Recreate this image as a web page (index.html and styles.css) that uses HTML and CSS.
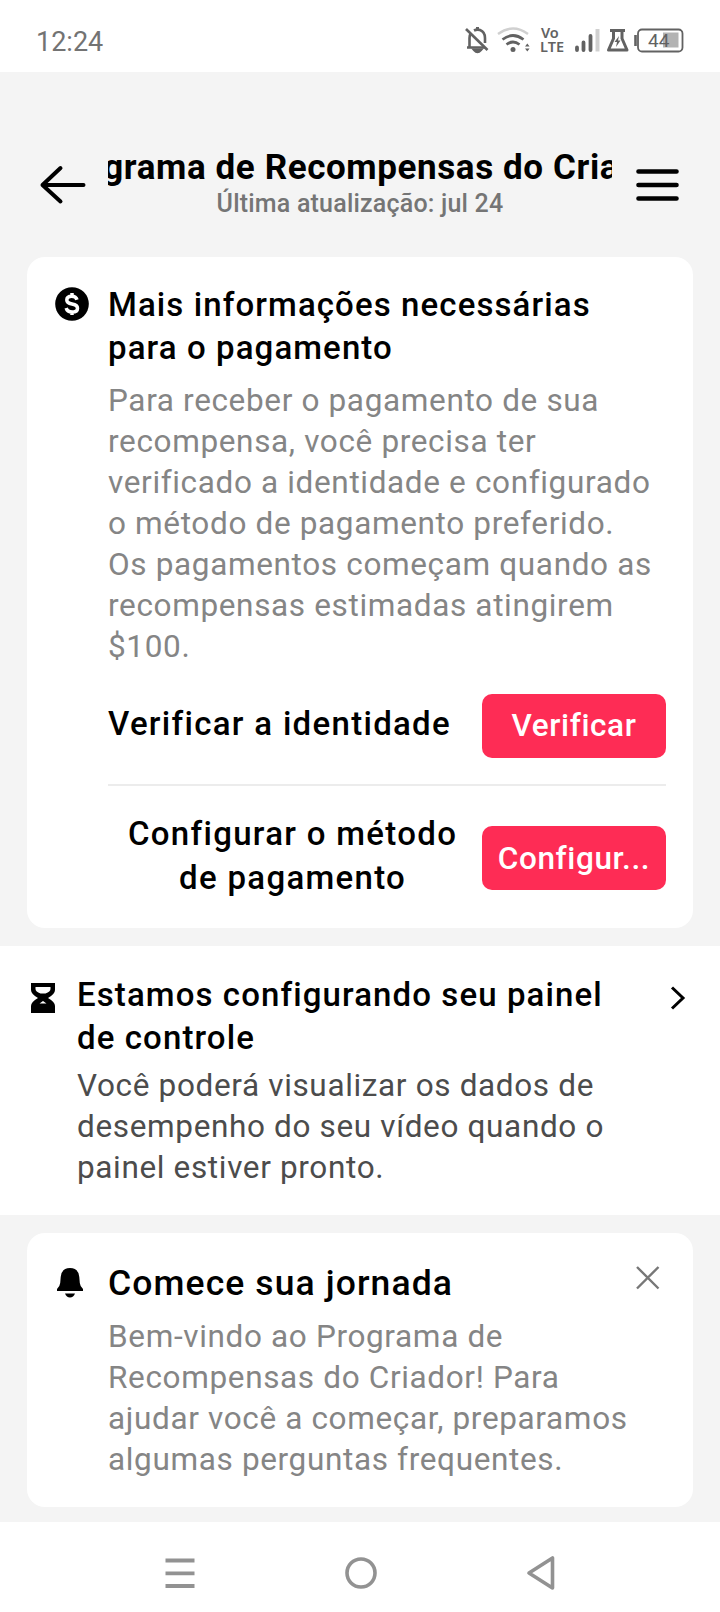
FILE: index.html
```html
<!DOCTYPE html>
<html lang="pt-BR">
<head>
    <meta charset="UTF-8">
    <meta name="viewport" content="width=device-width, initial-scale=1.0">
    <title>Programa de Recompensas do Criador</title>
    <link rel="stylesheet" href="styles.css">
</head>
<body>
    <div class="status-bar">
        <span class="clock">12:24</span>
        <svg class="status-icons" width="222" height="32" viewBox="0 0 222 32" fill="none" stroke="#626262">
            <!-- muted bell -->
            <path d="M2 22.500h18M4.500 22V13q0-3 1.500-5M9 5.500Q12 4 15 5q5 2 5 8v5" stroke-width="2.600"/>
            <path d="M1 4l21.500 21" stroke-width="2.600"/>
            <path d="M12.500 2v3M9.500 25q3 3.500 6 0z" stroke-width="3"/>
            <!-- wifi -->
            <path d="M33 9q15-11 30 0" stroke="#d0d0d0" stroke-width="2.400"/>
            <path d="M37.500 14.500q10.500-8 21 0M41.500 19.500q6.500-5 13 0" stroke-width="2.700"/>
            <circle cx="48" cy="24.500" r="2.500" fill="#626262" stroke="none"/>
            <path d="M60 21.500l2.300-3 2.300 3zM60 23.500l2.300 3 2.300-3z" fill="#626262" stroke="none"/>
            <!-- signal -->
            <path d="M112 25v-2.500M118.500 25V17.500M125.500 25V11" stroke-width="3.800" stroke-linecap="round"/>
            <path d="M132.500 26.500V4" stroke="#d0d0d0" stroke-width="4"/>
            <!-- flask -->
            <path d="M145 5.500h15M148.500 5.500v8L143.500 25h18.500l-5-11.500v-8" stroke-width="3" stroke-linejoin="round"/>
            <path d="M154 11l-4.500 6h2.500l-1 5 4.500-6.500h-2.500z" fill="#626262" stroke="none"/>
            <!-- battery -->
            <rect x="198" y="7.500" width="15.500" height="15" fill="#b3b3b3" stroke="none"/>
            <rect x="173" y="4.500" width="44.500" height="22" rx="4" stroke-width="1.800"/>
            <path d="M170.500 10v11" stroke-width="2.600"/>
            <text class="volte" x="76" y="12.500">Vo</text>
            <text class="volte" x="75" y="27">LTE</text>
            <text class="battery-level" x="183" y="21.500">44</text>
        </svg>
    </div>

    <div class="header">
        <svg width="48" height="42" viewBox="0 0 48 42" fill="none" stroke="#000" stroke-width="4" stroke-linecap="round" stroke-linejoin="round">
            <path d="M45.500 21h-41M22.500 4l-18 17 18 16.500"/>
        </svg>
        <div class="header-text">
            <h1><span>Programa de Recompensas do Criador</span></h1>
            <p>Última atualização: jul 24</p>
        </div>
        <svg class="menu" width="46" height="42" viewBox="0 0 46 42" stroke="#000" stroke-width="4.600" stroke-linecap="round">
            <path d="M2.500 7.500h38M2.500 21h38M2.500 34.500h38"/>
        </svg>
    </div>

    <div class="card payment">
        <svg class="icon" width="34" height="34" viewBox="0 0 34 34">
            <circle cx="17" cy="17" r="16.800"/>
            <path d="M22 12.800q-1-3.600-5.200-3.600-5 0-5 3.800 0 3 5.200 4 5.500 1 5.500 4.200 0 3.800-5.300 3.800-5 0-6-4M17 6v3M17 25v3" fill="none" stroke="#fff" stroke-width="3.500"/>
        </svg>
        <div class="content">
            <h2>Mais informações necessárias<br>para o pagamento</h2>
            <p class="text">Para receber o pagamento de sua<br>recompensa, você precisa ter<br>verificado a identidade e configurado<br>o método de pagamento preferido.<br>Os pagamentos começam quando as<br>recompensas estimadas atingirem<br>$100.</p>
            <div class="row">
                <span class="label">Verificar a identidade</span>
                <button class="btn">Verificar</button>
            </div>
            <div class="row">
                <span class="label label-center">Configurar o método<br>de pagamento</span>
                <button class="btn">Configur...</button>
            </div>
        </div>
    </div>

    <div class="panel">
        <svg class="icon" width="24" height="30" viewBox="0 0 24 30">
            <path d="M0 0h24v7q0 4-7 8 7 4 7 8v7H0v-7q0-4 7-8-7-4-7-8z"/>
            <path d="M4.500 4h15v2q0 2.500-5 4.500h-5Q4.500 8.500 4.500 6zM8.500 20.500L12 18l3.500 2.500z" fill="#fff"/>
        </svg>
        <div class="content">
            <h2>Estamos configurando seu painel<br>de controle</h2>
            <p class="text">Você poderá visualizar os dados de<br>desempenho do seu vídeo quando o<br>painel estiver pronto.</p>
        </div>
        <svg class="chevron" width="16" height="26" viewBox="0 0 16 26" fill="none" stroke="#000" stroke-width="3">
            <path d="M2 2.500L13 13 2 23.500"/>
        </svg>
    </div>

    <div class="card journey">
        <svg class="icon" width="28" height="30" viewBox="0 0 28 30">
            <path d="M14 0q8.500 0 9.300 9l.5 6Q24 18 27 21v2H1v-2q3-3 3.200-6l.5-6Q5.500 0 14 0zM9 25.500h10q-1.500 4-5 4t-5-4z"/>
        </svg>
        <div class="content">
            <h2>Comece sua jornada</h2>
            <p class="text">Bem-vindo ao Programa de<br>Recompensas do Criador! Para<br>ajudar você a começar, preparamos<br>algumas perguntas frequentes.</p>
        </div>
        <svg class="close" width="24" height="24" viewBox="0 0 24 24" stroke="#777" stroke-width="2.400">
            <path d="M1 1l21.500 21.500M22.500 1L1 22.500"/>
        </svg>
    </div>

    <div class="nav-bar">
        <svg width="30" height="34" viewBox="0 0 30 34" stroke="#929292" stroke-width="3.800">
            <path d="M.5 4.500h29M.5 17.300h29M.5 30h29"/>
        </svg>
        <svg width="34" height="34" viewBox="0 0 34 34" fill="none" stroke="#929292" stroke-width="3.600">
            <circle cx="17" cy="17" r="14"/>
        </svg>
        <svg width="30" height="36" viewBox="0 0 30 36" fill="none" stroke="#929292" stroke-width="3.600" stroke-linejoin="round">
            <path d="M26.500 3v30L3 18z"/>
        </svg>
    </div>
</body>
</html>
```
FILE: styles.css
```css
* {
    box-sizing: border-box;
}
body {
    margin: 0;
    width: 720px;
    height: 1612px;
    overflow: hidden;
    background-color: #f4f4f4;
    color: #000;
    font-family: Roboto, "Liberation Sans", sans-serif;
}
h1, h2, p {
    margin: 0;
}
svg {
    display: block;
    flex-shrink: 0;
}
.status-bar {
    height: 72px;
    padding: 0 33px 0 36px;
    display: flex;
    justify-content: space-between;
    align-items: flex-start;
    background-color: #fff;
}
.clock {
    margin-top: 26px;
    font-size: 27px;
    line-height: 32px;
    color: #737373;
}
.status-icons {
    margin-top: 25px;
    overflow: visible;
}
.volte, .battery-level {
    fill: #626262;
    stroke: none;
}
.volte {
    font: 600 14.500px "Noto Sans", sans-serif;
}
.battery-level {
    font-size: 19px;
}
.header {
    height: 185px;
    padding: 71px 40px 0 38px;
    display: flex;
    align-items: flex-start;
}
.header > svg {
    margin-top: 21px;
}
.header-text {
    width: 504px;
    margin: 0 auto 0 22px;
    text-align: center;
}
.header h1 {
    height: 48px;
    display: flex;
    justify-content: center;
    overflow: hidden;
    white-space: nowrap;
    font-size: 35px;
    line-height: 49px;
    font-weight: 700;
    letter-spacing: 0.600px;
}
.header p {
    font-size: 25px;
    line-height: 26px;
    font-weight: 500;
    letter-spacing: 0.200px;
    color: #757575;
}
.header > .menu {
    margin-right: -2px;
}
.card {
    display: flex;
    margin: 0 27px;
    border-radius: 18px;
    background-color: #fff;
}
.payment {
    height: 671px;
    padding: 26px 27px 0 28px;
}
.payment .icon {
    margin-top: 4px;
}
.card .content {
    flex: 1;
}
.payment .content {
    margin-left: 19px;
}
h2 {
    font-size: 33px;
    line-height: 43px;
    font-weight: 500;
    letter-spacing: 1.100px;
    white-space: nowrap;
}
.text {
    font-size: 31.500px;
    line-height: 41px;
    letter-spacing: 0.650px;
    color: #858585;
    white-space: nowrap;
}
.payment .text {
    margin-top: 11px;
}
.row {
    display: flex;
    align-items: center;
    justify-content: space-between;
}
.row:nth-of-type(1) {
    height: 119px;
    border-bottom: 2px solid #ececec;
}
.row:nth-of-type(2) {
    height: 144px;
}
.label {
    padding-bottom: 3px;
    font-size: 33px;
    line-height: 44px;
    font-weight: 500;
    letter-spacing: 1.300px;
    white-space: nowrap;
}
.label-center {
    margin-left: 20px;
    padding-bottom: 5px;
    text-align: center;
}
.btn {
    width: 184px;
    height: 64px;
    padding: 0;
    border: none;
    border-radius: 10px;
    background-color: #fe2c55;
    color: #fff;
    font: 500 31.500px Roboto, sans-serif;
    letter-spacing: 0.600px;
}
.panel {
    display: flex;
    height: 269px;
    margin: 18px 0;
    padding: 27px 34px 0 31px;
    background-color: #fff;
}
.panel .icon {
    margin-top: 10px;
}
.panel .content {
    flex: 1;
    margin-left: 22px;
}
.panel .text {
    margin-top: 6px;
    color: #4c4c4c;
}
.chevron {
    margin-top: 12px;
}
.journey {
    height: 274px;
    padding: 26px 33px 0 29px;
}
.journey .icon {
    margin-top: 9px;
}
.journey .content {
    margin-left: 24px;
}
.journey h2 {
    font-size: 35.500px;
    line-height: 48px;
}
.journey .text {
    margin-top: 9px;
}
.close {
    margin-top: 7px;
}
.nav-bar {
    display: flex;
    align-items: center;
    justify-content: space-between;
    height: 90px;
    margin-top: 15px;
    padding: 12px 164px 0 165px;
    background-color: #fff;
}
```
